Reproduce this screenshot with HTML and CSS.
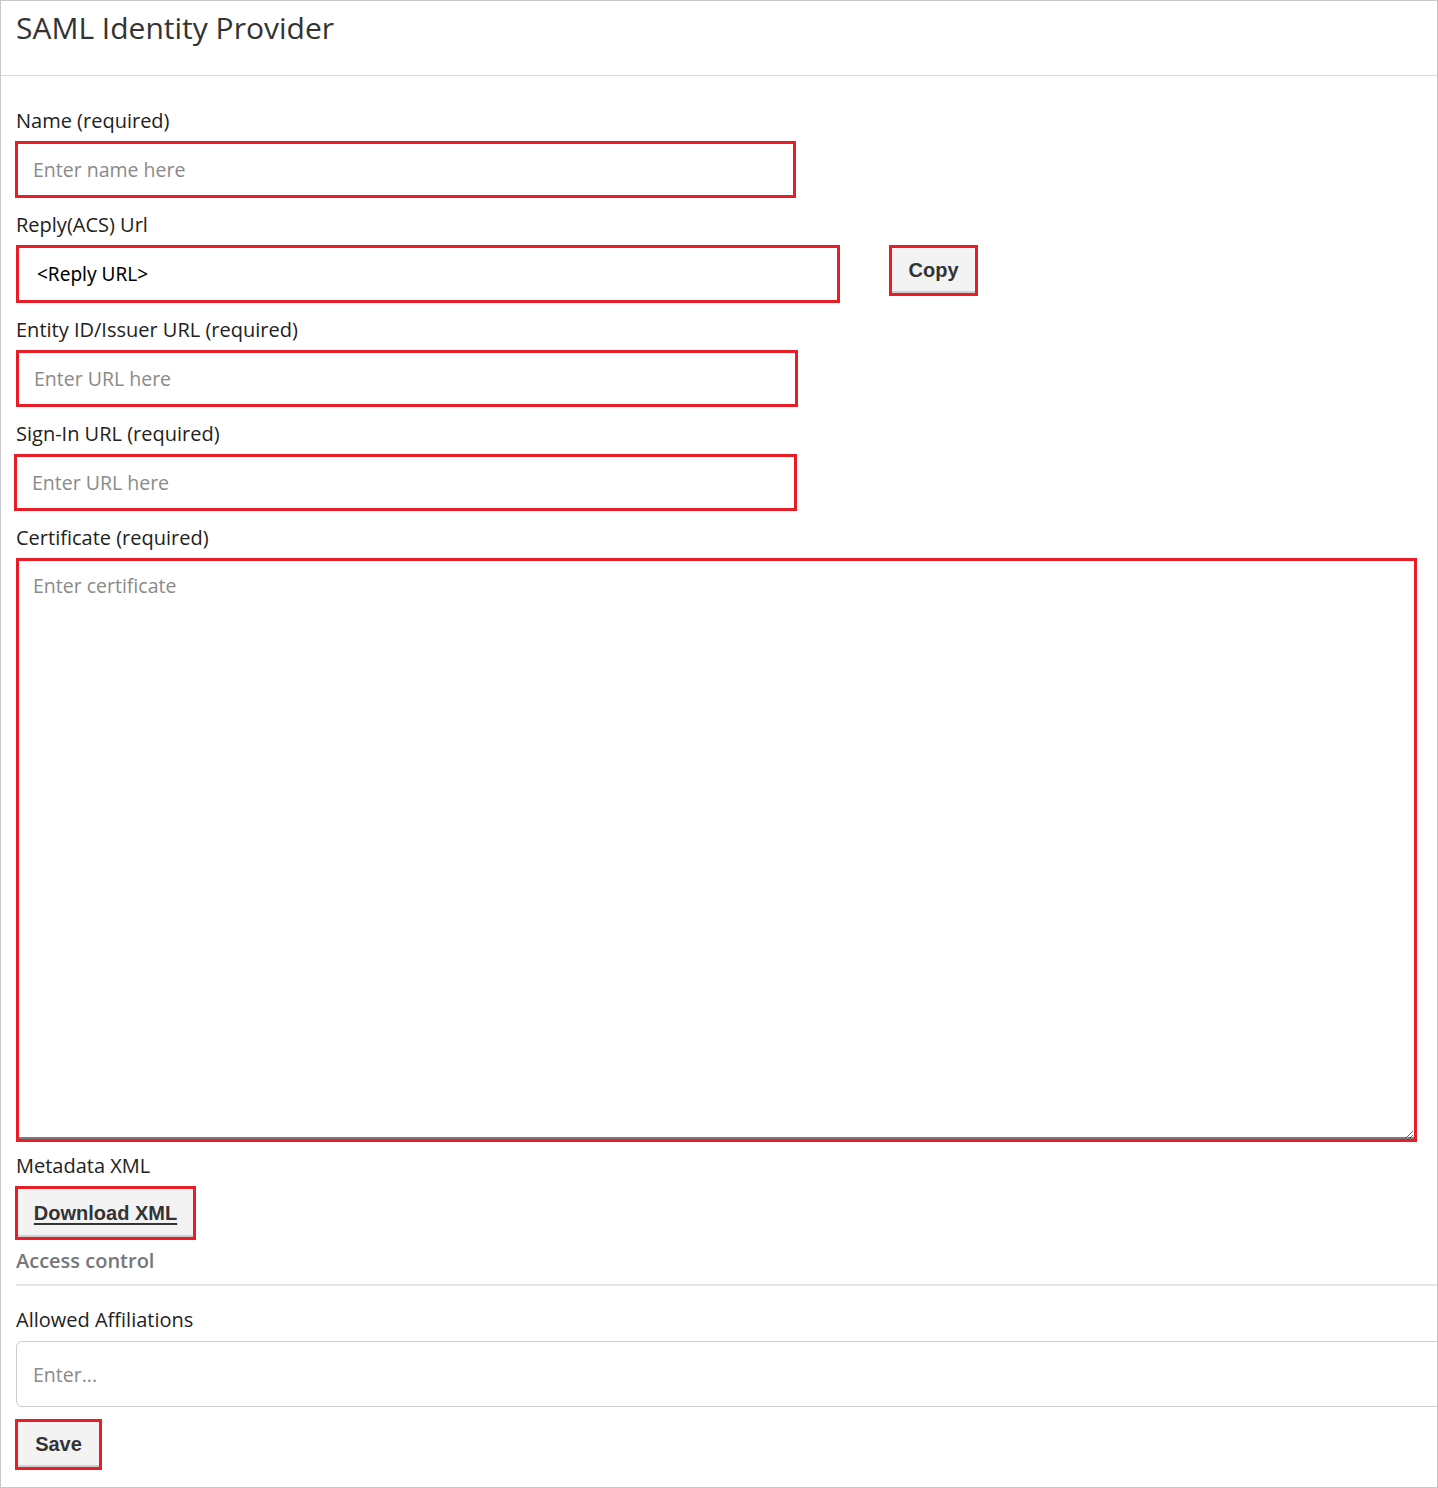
FILE: index.html
```html
<!DOCTYPE html>
<html lang="en">
<head>
  <meta charset="UTF-8" />
  <title>SAML Identity Provider</title>
  <link rel="stylesheet" href="styles.css">
</head>
<body>
  <div class="page">
    <div class="page-header">
      <h1>SAML Identity Provider</h1>
    </div>

    <form class="saml-form" onsubmit="return false">
      <!-- Name -->
      <label class="field-label first" for="name">Name (required)</label>
      <input type="text" id="name" class="hl-input w-name" placeholder="Enter name here" />

      <!-- Reply URL -->
      <label class="field-label" for="reply">Reply(ACS) Url</label>
      <div class="reply-row">
        <input type="text" id="reply" class="hl-input w-reply reply-value" value="<Reply URL>" readonly />
        <button type="button" class="hl-button copy-button">Copy</button>
      </div>

      <!-- Entity ID -->
      <label class="field-label" for="entity">Entity ID/Issuer URL (required)</label>
      <input type="text" id="entity" class="hl-input w-entity" placeholder="Enter URL here" />

      <!-- Sign-In -->
      <label class="field-label" for="signin">Sign-In URL (required)</label>
      <input type="text" id="signin" class="hl-input w-signin" placeholder="Enter URL here" />

      <!-- Certificate -->
      <label class="field-label" for="cert">Certificate (required)</label>
      <textarea id="cert" class="cert-box" placeholder="Enter certificate"></textarea>

      <!-- Metadata -->
      <label class="field-label after-cert">Metadata XML</label>
      <button type="button" class="hl-button download-button">Download XML</button>

      <!-- Access control section -->
      <div class="section-title">Access control</div>
      <div class="section-rule"></div>

      <label class="field-label affil-label" for="affil">Allowed Affiliations</label>
      <input type="text" id="affil" class="plain-input" placeholder="Enter..." />

      <button type="submit" class="hl-button save-button">Save</button>
    </form>
  </div>
</body>
</html>
```

FILE: styles.css
```css
body {
  margin: 0;
  font-family: 'Open Sans', sans-serif;
  color: #222;
  background: #fff;
}

.page {
  box-sizing: border-box;
  width: 1438px;
  height: 1488px;
  border: 1px solid #c8c8c8;
  overflow: hidden;
}

.page-header {
  height: 75px;
  padding: 6px 15px 0;
  box-sizing: border-box;
  border-bottom: 1px solid #d9d9d9;
}

.page-header h1 {
  margin: 0;
  font-size: 30px;
  font-weight: 400;
  color: #333;
  line-height: normal;
}

.saml-form {
  display: flex;
  flex-direction: column;
  align-items: flex-start;
  padding: 0 0 0 14px;
}

.field-label {
  display: block;
  font-size: 20px;
  line-height: 26px;
  margin: 14px 0 7px 1px;
  color: #222;
}

.field-label.first {
  margin-top: 32px;
}

.field-label.after-cert {
  margin-top: 11px;
}

/* Red highlighted inputs */
.hl-input {
  box-sizing: border-box;
  height: 57px;
  border: 3px solid #e81d25;
  padding: 0 15px;
  font-family: 'Open Sans', sans-serif;
  font-size: 19.5px;
  color: #222;
  background: #fff;
  outline: none;
  margin: 0;
}

.hl-input::placeholder,
.cert-box::placeholder,
.plain-input::placeholder {
  color: #8a8a8a;
}

.w-name { width: 781px; }
.w-reply { width: 824px; height: 58px; margin-left: 1px; }
.w-entity { width: 782px; margin-left: 1px; }
.w-signin { width: 783px; margin-left: -1px; }

.reply-row {
  display: flex;
  align-items: flex-start;
  gap: 49px;
}

.reply-value {
  font-family: 'Noto Sans', sans-serif;
  font-size: 19px;
  color: #000;
  padding-left: 18px;
}

.cert-box {
  box-sizing: border-box;
  width: 1401px;
  height: 584px;
  margin: 0 0 0 1px;
  border: 3px solid #e81d25;
  padding: 12px 14px;
  font-family: 'Open Sans', sans-serif;
  font-size: 19.5px;
  line-height: 26px;
  outline: none;
  box-shadow: inset 0 -2px 0 #7a7a7a;
}

/* Highlighted gray buttons */
.hl-button {
  box-sizing: border-box;
  border: 3px solid #e81d25;
  background: #f3f3f3;
  color: #333;
  font-family: 'Liberation Sans', Arial, sans-serif;
  font-weight: bold;
  font-size: 20px;
  cursor: pointer;
  padding: 0;
  box-shadow: inset 0 -2px 0 #d0d0d0;
}

.copy-button {
  width: 89px;
  height: 51px;
}

.download-button {
  width: 181px;
  height: 54px;
  text-decoration: underline;
  text-underline-offset: 3px;
}

.section-title {
  font-size: 20px;
  line-height: 26px;
  font-weight: 600;
  color: #777;
  margin-top: 8px;
  margin-left: 1px;
}

.section-rule {
  align-self: stretch;
  height: 2px;
  background: #e6e6e6;
  margin: 10px 0 0 1px;
}

.field-label.affil-label {
  margin-top: 21px;
  margin-bottom: 8px;
}

.plain-input {
  box-sizing: border-box;
  width: 1440px;
  height: 66px;
  margin: 0 0 0 1px;
  border: 1px solid #cccccc;
  border-radius: 6px;
  padding: 0 16px;
  font-family: 'Open Sans', sans-serif;
  font-size: 19.5px;
  outline: none;
}

.save-button {
  margin-top: 12px;
  width: 87px;
  height: 51px;
}
```
